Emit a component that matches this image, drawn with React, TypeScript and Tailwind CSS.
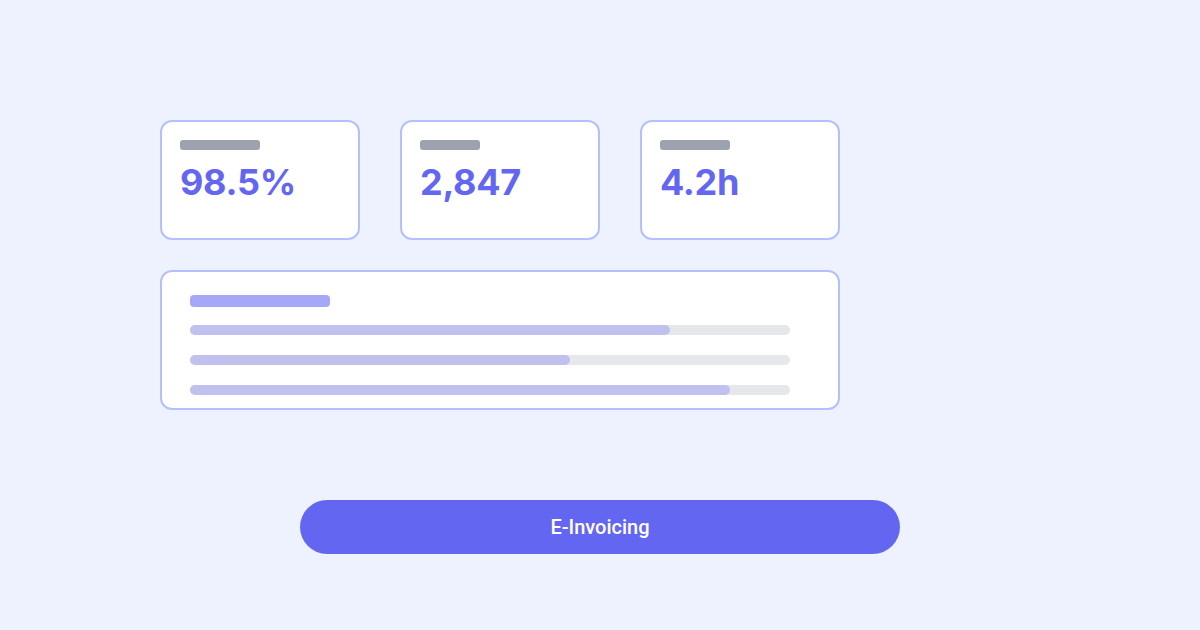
const stats = [
  { label: "w-[80px]", value: "98.5%" },
  { label: "w-[60px]", value: "2,847" },
  { label: "w-[70px]", value: "4.2h" },
];

const bars = [80, 63.33, 90];

export default function App() {
  return (
    <div className="w-[1200px] h-[630px] bg-[#eef2ff] flex flex-col font-['Inter','Liberation_Sans',sans-serif]">
      <div className="pl-[160px] pt-[120px] flex flex-col gap-[30px]">
        {/* stat cards */}
        <div className="flex gap-[40px]">
          {stats.map((s) => (
            <div
              key={s.value}
              className="w-[200px] h-[120px] bg-white border-2 border-[#b4c0fc] rounded-[12px] px-[18px] pt-[18px]"
            >
              <div className={`${s.label} h-[10px] rounded-[3px] bg-[#9ca3af]`} />
              <p className="mt-[10px] text-[36px] leading-[44px] font-bold tracking-[-0.3px] text-[#6366f1]">
                {s.value}
              </p>
            </div>
          ))}
        </div>

        {/* progress card */}
        <div className="w-[680px] h-[140px] bg-white border-2 border-[#b4c0fc] rounded-[12px] px-[28px] pt-[23px]">
          <div className="w-[140px] h-[12px] rounded-[4px] bg-[#a5a8f7]" />
          <div className="mt-[18px] flex flex-col gap-[20px]">
            {bars.map((b, i) => (
              <div key={i} className="w-[600px] h-[10px] rounded-full bg-[#e5e7eb]">
                <div className="h-full rounded-full bg-[#c0c1ee]" style={{ width: `${b}%` }} />
              </div>
            ))}
          </div>
        </div>
      </div>

      <div className="mt-[90px] flex justify-center">
        <button className="w-[600px] h-[54px] rounded-full bg-[#6366f1] text-white text-[20px] font-medium font-['Roboto',sans-serif]">
          E-Invoicing
        </button>
      </div>
    </div>
  );
}
